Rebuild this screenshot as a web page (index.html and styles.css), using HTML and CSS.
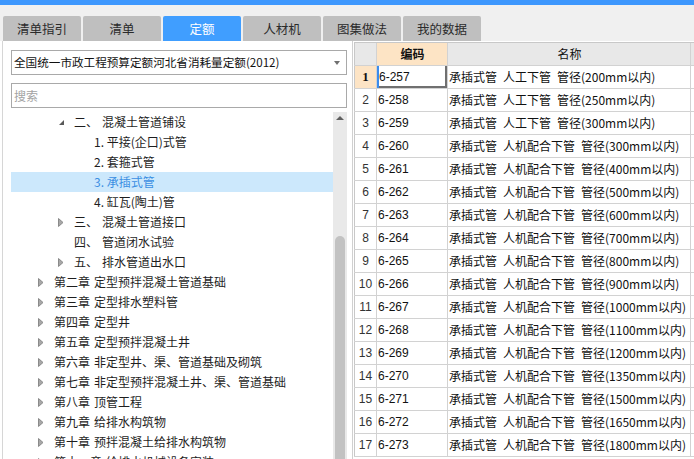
FILE: index.html
```html
<!DOCTYPE html>
<html lang="zh-CN">
<head>
<meta charset="utf-8">
<title>定额</title>
<link rel="stylesheet" href="styles.css">
</head>
<body>
<div class="topbar"></div>
<div class="tabs">
  <div class="tab">清单指引</div>
  <div class="tab">清单</div>
  <div class="tab active">定额</div>
  <div class="tab">人材机</div>
  <div class="tab">图集做法</div>
  <div class="tab">我的数据</div>
</div>
<div class="main">
  <div class="left">
    <div class="select">
      <span class="select-text">全国统一市政工程预算定额河北省消耗量定额(2012)</span>
      <span class="caret"></span>
    </div>
    <input class="search" type="text" placeholder="搜索">
    <div class="tree-wrap">
      <div class="tree">
        <div class="node l2"><span class="arrow"><svg width="7" height="7" viewBox="0 0 7 7"><polygon points="6,1 6,6 1,6" fill="#595959"/></svg></span><span class="num">二、</span>混凝土管道铺设</div>
        <div class="node l3"><span class="arrow"></span>1. 平接(企口)式管</div>
        <div class="node l3"><span class="arrow"></span>2. 套箍式管</div>
        <div class="node l3 sel"><span class="arrow"></span>3. 承插式管</div>
        <div class="node l3"><span class="arrow"></span>4. 缸瓦(陶土)管</div>
        <div class="node l2"><span class="arrow"><svg width="6" height="9" viewBox="0 0 6 9"><polygon points="0.5,0.5 5,4.5 0.5,8.5" fill="#a8a8a8" stroke="#8a8a8a"/></svg></span><span class="num">三、</span>混凝土管道接口</div>
        <div class="node l2"><span class="arrow"></span><span class="num">四、</span>管道闭水试验</div>
        <div class="node l2"><span class="arrow"><svg width="6" height="9" viewBox="0 0 6 9"><polygon points="0.5,0.5 5,4.5 0.5,8.5" fill="#a8a8a8" stroke="#8a8a8a"/></svg></span><span class="num">五、</span>排水管道出水口</div>
        <div class="node l1"><span class="arrow"><svg width="6" height="9" viewBox="0 0 6 9"><polygon points="0.5,0.5 5,4.5 0.5,8.5" fill="#a8a8a8" stroke="#8a8a8a"/></svg></span><span class="num">第二章</span>定型预拌混凝土管道基础</div>
        <div class="node l1"><span class="arrow"><svg width="6" height="9" viewBox="0 0 6 9"><polygon points="0.5,0.5 5,4.5 0.5,8.5" fill="#a8a8a8" stroke="#8a8a8a"/></svg></span><span class="num">第三章</span>定型排水塑料管</div>
        <div class="node l1"><span class="arrow"><svg width="6" height="9" viewBox="0 0 6 9"><polygon points="0.5,0.5 5,4.5 0.5,8.5" fill="#a8a8a8" stroke="#8a8a8a"/></svg></span><span class="num">第四章</span>定型井</div>
        <div class="node l1"><span class="arrow"><svg width="6" height="9" viewBox="0 0 6 9"><polygon points="0.5,0.5 5,4.5 0.5,8.5" fill="#a8a8a8" stroke="#8a8a8a"/></svg></span><span class="num">第五章</span>定型预拌混凝土井</div>
        <div class="node l1"><span class="arrow"><svg width="6" height="9" viewBox="0 0 6 9"><polygon points="0.5,0.5 5,4.5 0.5,8.5" fill="#a8a8a8" stroke="#8a8a8a"/></svg></span><span class="num">第六章</span>非定型井、渠、管道基础及砌筑</div>
        <div class="node l1"><span class="arrow"><svg width="6" height="9" viewBox="0 0 6 9"><polygon points="0.5,0.5 5,4.5 0.5,8.5" fill="#a8a8a8" stroke="#8a8a8a"/></svg></span><span class="num">第七章</span>非定型预拌混凝土井、渠、管道基础</div>
        <div class="node l1"><span class="arrow"><svg width="6" height="9" viewBox="0 0 6 9"><polygon points="0.5,0.5 5,4.5 0.5,8.5" fill="#a8a8a8" stroke="#8a8a8a"/></svg></span><span class="num">第八章</span>顶管工程</div>
        <div class="node l1"><span class="arrow"><svg width="6" height="9" viewBox="0 0 6 9"><polygon points="0.5,0.5 5,4.5 0.5,8.5" fill="#a8a8a8" stroke="#8a8a8a"/></svg></span><span class="num">第九章</span>给排水构筑物</div>
        <div class="node l1"><span class="arrow"><svg width="6" height="9" viewBox="0 0 6 9"><polygon points="0.5,0.5 5,4.5 0.5,8.5" fill="#a8a8a8" stroke="#8a8a8a"/></svg></span><span class="num">第十章</span>预拌混凝土给排水构筑物</div>
        <div class="node l1"><span class="arrow"><svg width="6" height="9" viewBox="0 0 6 9"><polygon points="0.5,0.5 5,4.5 0.5,8.5" fill="#a8a8a8" stroke="#8a8a8a"/></svg></span><span class="num">第十一章</span>给排水机械设备安装</div>
      </div>
      <div class="vscroll">
        <div class="up"></div>
        <div class="thumb"></div>
      </div>
    </div>
  </div>
  <div class="right">
    <div class="grid">
      <div class="row head">
        <div class="c rn"></div>
        <div class="c code hl">编码</div>
        <div class="c name">名称</div>
        <div class="c extra"></div>
      </div>
      <div class="row cur">
        <div class="c rn">1</div>
        <div class="c code focus">6-257</div>
        <div class="c name">承插式管&ensp;人工下管&ensp;管径(200mm以内)</div>
        <div class="c extra"></div>
      </div>
      <div class="row"><div class="c rn">2</div><div class="c code">6-258</div><div class="c name">承插式管&ensp;人工下管&ensp;管径(250mm以内)</div><div class="c extra"></div></div>
      <div class="row"><div class="c rn">3</div><div class="c code">6-259</div><div class="c name">承插式管&ensp;人工下管&ensp;管径(300mm以内)</div><div class="c extra"></div></div>
      <div class="row"><div class="c rn">4</div><div class="c code">6-260</div><div class="c name">承插式管&ensp;人机配合下管&ensp;管径(300mm以内)</div><div class="c extra"></div></div>
      <div class="row"><div class="c rn">5</div><div class="c code">6-261</div><div class="c name">承插式管&ensp;人机配合下管&ensp;管径(400mm以内)</div><div class="c extra"></div></div>
      <div class="row"><div class="c rn">6</div><div class="c code">6-262</div><div class="c name">承插式管&ensp;人机配合下管&ensp;管径(500mm以内)</div><div class="c extra"></div></div>
      <div class="row"><div class="c rn">7</div><div class="c code">6-263</div><div class="c name">承插式管&ensp;人机配合下管&ensp;管径(600mm以内)</div><div class="c extra"></div></div>
      <div class="row"><div class="c rn">8</div><div class="c code">6-264</div><div class="c name">承插式管&ensp;人机配合下管&ensp;管径(700mm以内)</div><div class="c extra"></div></div>
      <div class="row"><div class="c rn">9</div><div class="c code">6-265</div><div class="c name">承插式管&ensp;人机配合下管&ensp;管径(800mm以内)</div><div class="c extra"></div></div>
      <div class="row"><div class="c rn">10</div><div class="c code">6-266</div><div class="c name">承插式管&ensp;人机配合下管&ensp;管径(900mm以内)</div><div class="c extra"></div></div>
      <div class="row"><div class="c rn">11</div><div class="c code">6-267</div><div class="c name">承插式管&ensp;人机配合下管&ensp;管径(1000mm以内)</div><div class="c extra"></div></div>
      <div class="row"><div class="c rn">12</div><div class="c code">6-268</div><div class="c name">承插式管&ensp;人机配合下管&ensp;管径(1100mm以内)</div><div class="c extra"></div></div>
      <div class="row"><div class="c rn">13</div><div class="c code">6-269</div><div class="c name">承插式管&ensp;人机配合下管&ensp;管径(1200mm以内)</div><div class="c extra"></div></div>
      <div class="row"><div class="c rn">14</div><div class="c code">6-270</div><div class="c name">承插式管&ensp;人机配合下管&ensp;管径(1350mm以内)</div><div class="c extra"></div></div>
      <div class="row"><div class="c rn">15</div><div class="c code">6-271</div><div class="c name">承插式管&ensp;人机配合下管&ensp;管径(1500mm以内)</div><div class="c extra"></div></div>
      <div class="row"><div class="c rn">16</div><div class="c code">6-272</div><div class="c name">承插式管&ensp;人机配合下管&ensp;管径(1650mm以内)</div><div class="c extra"></div></div>
      <div class="row"><div class="c rn">17</div><div class="c code">6-273</div><div class="c name">承插式管&ensp;人机配合下管&ensp;管径(1800mm以内)</div><div class="c extra"></div></div>
    </div>
  </div>
</div>
</body>
</html>
```
FILE: styles.css
```css
* { box-sizing: border-box; margin: 0; padding: 0; }
html, body { width: 694px; height: 459px; overflow: hidden; }
body {
  background: #f0f0f0;
  font-family: "Noto Sans CJK SC", "Noto Sans", sans-serif;
  font-size: 12px;
  color: #222;
}
.topbar { height: 5px; background: #3d97fd; }
.tabs { display: flex; gap: 2px; padding: 11px 0 0 3px; height: 36px; }
.tab {
  width: 78px; height: 25px;
  background: #bfbfbf;
  border-radius: 2px 2px 0 0;
  text-align: center; line-height: 25px;
  font-size: 12.5px; color: #2b2b2b;
}
.tab.active { background: #409eff; color: #fff; }

.main { display: flex; height: 418px; background: #fff; }

.left {
  width: 351px; margin-left: 2px; flex: none;
  border-left: 1px solid #d6d6d6; border-right: 1px solid #d0d0d0;
  padding: 9px 5px 0 8px;
  display: flex; flex-direction: column;
  background: #fff;
}
.select {
  height: 25px; border: 1px solid #a9a9a9;
  display: flex; align-items: center; padding-left: 2px; flex: none;
}
.select-text { flex: 1; font-size: 11.6px; white-space: nowrap; color: #111; line-height: 23px; }
.caret {
  width: 0; height: 0;
  border-left: 3px solid transparent; border-right: 3px solid transparent;
  border-top: 4px solid #707070;
  margin-right: 6px;
}
.search {
  margin-top: 8px; height: 25px; flex: none;
  border: 1px solid #a9a9a9; padding-left: 2px;
  font: 12px "Noto Sans CJK SC", sans-serif; outline: none; color: #222;
}
.search::placeholder { color: #a3a3a3; }

.tree-wrap { margin-top: 4px; flex: 1; display: flex; overflow: hidden; min-height: 0; }
.tree { flex: 1; overflow: hidden; }
.node {
  height: 20px; line-height: 20px;
  display: flex; align-items: center;
  white-space: nowrap; color: #1e1e1e;
}
.node.l1 { padding-left: 27px; }
.node.l2 { padding-left: 47px; }
.node.l3 { padding-left: 67px; }
.node.sel { background: #cce8fc; color: #3b8fe3; }
.arrow { width: 16px; height: 20px; display: flex; align-items: center; flex: none; }
.num { margin-right: 4px; }

.vscroll {
  width: 14px; flex: none; background: #e9e9e9;
  display: flex; flex-direction: column; align-items: center;
}
.up {
  width: 0; height: 0; margin-top: 4px;
  border-left: 4px solid transparent; border-right: 4px solid transparent;
  border-bottom: 4px solid #606060;
}
.thumb {
  width: 10px; flex: 1; margin-top: 116px;
  background: #c2c2c2; border-radius: 5px 5px 0 0;
}

.right { flex: 1; padding: 1px 0 0 1px; overflow: hidden; background: #fff; }
.grid { width: 400px; border-top: 1px solid #c8c8c8; }
.row {
  display: grid; grid-template-columns: 23px 71px 243px 1fr;
  height: 23px; border-bottom: 1px solid #d2d2d2;
}
.row.head { height: 23px; }
.c {
  border-right: 1px solid #d2d2d2;
  line-height: 22px; white-space: nowrap; overflow: hidden;
}
.c.rn {
  border-left: 1px solid #c8c8c8;
  text-align: center;
  font-family: "Liberation Sans", sans-serif; font-size: 12px; color: #333;
}
.c.code { font-family: "Liberation Sans", sans-serif; padding-left: 1px; color: #111; }
.c.name { padding-left: 1px; color: #111; }
.head .c { background: #e8e8e8; text-align: center; font-family: "Noto Sans CJK SC", sans-serif; color: #111; }
.head .c.hl { background: #fde4c5; font-weight: bold; }
.cur .c.rn {
  background: #fde4c5; font-family: "Liberation Serif", serif;
  font-weight: bold; font-size: 13px; color: #111;
}
.c.focus { box-shadow: inset 2px 0 0 #3b8ced, inset -2px -2px 0 #707070; padding-left: 2px; }
```
